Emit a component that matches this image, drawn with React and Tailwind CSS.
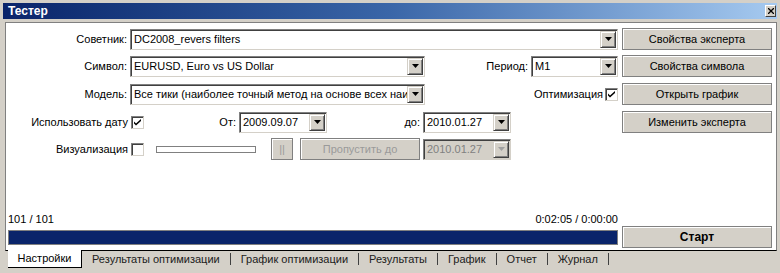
import React from 'react'

const FONT = { fontFamily: '"Liberation Sans", Arial, sans-serif' }

function Arrow({ disabled }) {
  return (
    <div className="flex h-[17px] w-[16px] items-center justify-center border border-t-[#d4d0c8] border-l-[#d4d0c8] border-r-[#404040] border-b-[#404040] bg-[#d4d0c8] shadow-[inset_1px_1px_0_#fff,inset_-1px_-1px_0_#808080]">
      <svg width="7" height="4" viewBox="0 0 7 4">
        <path d="M0 0h7L3.5 4z" fill={disabled ? '#a0a0a0' : '#000'} />
      </svg>
    </div>
  )
}

function Combo({ className, value, disabled }) {
  return (
    <div className={`flex h-[21px] shrink-0 items-center border border-t-[#808080] border-l-[#808080] border-r-[#d4d0c8] border-b-[#d4d0c8] pr-px shadow-[inset_1px_1px_0_#404040] ${disabled ? 'bg-[#d4d0c8] text-[#808080]' : 'bg-white text-black'} ${className}`}>
      <div className="min-w-0 flex-1 overflow-hidden whitespace-nowrap pl-[3px] leading-[17px]">{value}</div>
      <Arrow disabled={disabled} />
    </div>
  )
}

function Check({ on }) {
  return (
    <div className="flex h-[13px] w-[13px] shrink-0 items-center justify-center border border-[#808080] border-r-[#d4d0c8] border-b-[#d4d0c8] bg-white shadow-[inset_1px_1px_0_#404040]">
      {on && (
        <svg width="7" height="7" viewBox="0 0 7 7">
          <path d="M0 2.5l2 2 5-4.5v2l-5 4.5-2-2z" fill="#000" />
        </svg>
      )}
    </div>
  )
}

function Btn({ children, className = '', disabled, bold }) {
  return (
    <button className={`flex h-[22px] shrink-0 items-center justify-center border border-[#808080] bg-[#d4d0c8] shadow-[inset_1px_1px_0_#fff] text-[11px] ${disabled ? 'text-[#9a9a9a]' : 'text-black'} ${bold ? 'font-bold text-[12px]' : ''} ${className}`}>
      {children}
    </button>
  )
}

function Label({ className = '', children }) {
  return <div className={`shrink-0 whitespace-nowrap text-right ${className}`}>{children}</div>
}

const TABS = ['Результаты оптимизации', 'График оптимизации', 'Результаты', 'График', 'Отчет', 'Журнал']

export default function App() {
  return (
    <div className="flex h-[273px] w-[780px] flex-col overflow-hidden bg-[#d4d0c8] px-[3px] pt-[3px] text-[11px] text-black" style={FONT}>
      {/* Title */}
      <div className="flex h-[16px] shrink-0 items-center bg-gradient-to-r from-[#0a246a] via-[#3a66a8] to-[#a6caf0] pl-[5px] pr-px">
        <span className="text-[12px] font-bold leading-none text-white">Тестер</span>
        <div className="ml-auto flex h-[12px] w-[11px] items-center justify-center border border-t-white border-l-white border-r-[#404040] border-b-[#404040] bg-[#d4d0c8]">
          <svg width="6" height="6" viewBox="0 0 6 6">
            <path d="M0 0l6 6M6 0L0 6" stroke="#000" strokeWidth="1.3" />
          </svg>
        </div>
      </div>

      {/* Settings page */}
      <div className="ml-[2px] mt-[3px] flex h-[229px] shrink-0 flex-col border border-[#808080] border-b-black bg-white pt-[5px]">
        {/* row 1 */}
        <div className="flex h-[22px] items-center">
          <div className="flex w-[612px] items-center">
            <Label className="w-[121px]">Советник:</Label>
            <Combo className="ml-[3px] w-[488px]" value="DC2008_revers filters" />
          </div>
          <Btn className="ml-[4px] w-[150px]">Свойства эксперта</Btn>
        </div>
        {/* row 2 */}
        <div className="mt-[5px] flex h-[22px] items-center">
          <div className="flex w-[612px] items-center">
            <Label className="w-[121px]">Символ:</Label>
            <Combo className="ml-[3px] w-[295px]" value="EURUSD, Euro vs US Dollar" />
            <Label className="flex-1 pr-[3px]">Период:</Label>
            <Combo className="w-[87px]" value="M1" />
          </div>
          <Btn className="ml-[4px] w-[150px]">Свойства символа</Btn>
        </div>
        {/* row 3 */}
        <div className="mt-[6px] flex h-[22px] items-center">
          <div className="flex w-[612px] items-center">
            <Label className="w-[121px]">Модель:</Label>
            <Combo className="ml-[3px] w-[295px]" value="Все тики (наиболее точный метод на основе всех наи" />
            <Label className="flex-1 pr-[2px]">Оптимизация</Label>
            <Check on />
          </div>
          <Btn className="ml-[4px] w-[150px]">Открыть график</Btn>
        </div>
        {/* row 4 */}
        <div className="mt-[6px] flex h-[22px] items-center">
          <div className="flex w-[612px] items-center">
            <Label className="w-[122px]">Использовать дату</Label>
            <div className="ml-[3px]"><Check on /></div>
            <Label className="w-[92px]">От:</Label>
            <Combo className="ml-[3px] w-[88px]" value="2009.09.07" />
            <Label className="w-[93px]">до:</Label>
            <Combo className="ml-[3px] w-[88px]" value="2010.01.27" />
          </div>
          <Btn className="ml-[4px] w-[150px]">Изменить эксперта</Btn>
        </div>
        {/* row 5 */}
        <div className="mt-[5px] flex h-[22px] items-center">
          <Label className="w-[122px]">Визуализация</Label>
          <div className="ml-[3px]"><Check /></div>
          <div className="ml-[12px] h-[7px] w-[100px] border border-[#808080] bg-white" />
          <Btn disabled className="ml-[15px] w-[22px]">||</Btn>
          <Btn disabled className="ml-[7px] w-[120px]">Пропустить до</Btn>
          <Combo disabled className="ml-[3px] w-[88px]" value="2010.01.27" />
        </div>

        <div className="flex-1" />

        {/* counters */}
        <div className="flex h-[13px] w-[612px] items-center justify-between pl-[2px] leading-none">
          <span>101 / 101</span>
          <span>0:02:05 / 0:00:00</span>
        </div>
        <div className="mb-[2px] flex h-[22px] items-center">
          <div className="ml-[2px] h-[15px] w-[610px] border border-[#808080] bg-[#0a246a]" />
          <Btn bold className="ml-[4px] w-[150px]">Старт</Btn>
        </div>
      </div>

      {/* Tabs */}
      <div className="relative -mt-px flex h-[18px] items-center">
        <div className="ml-[5px] flex h-[18px] w-[74px] items-center justify-center border-b border-r border-black bg-white">
          Настройки
        </div>
        {TABS.map(t => (
          <div key={t} className="flex items-center">
            <span className="px-[10px] text-[#202020]">{t}</span>
            <span className="h-[12px] w-px bg-[#404040]" />
          </div>
        ))}
      </div>
    </div>
  )
}
